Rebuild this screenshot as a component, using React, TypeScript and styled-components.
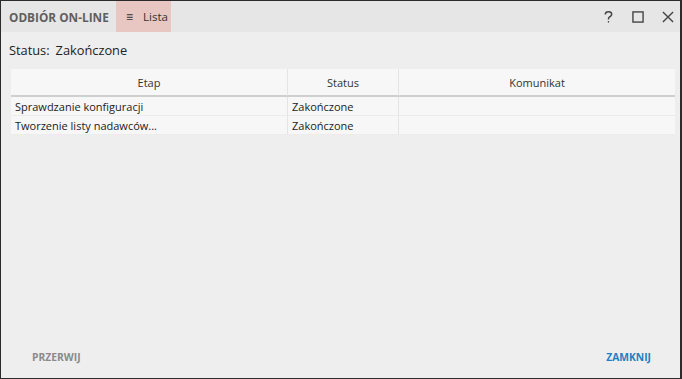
import React from "react";
import styled, { createGlobalStyle } from "styled-components";

const GlobalStyle = createGlobalStyle`
  html, body {
    margin: 0;
    padding: 0;
    background: #eeeeee;
  }
  * {
    box-sizing: border-box;
  }
`;

const Window = styled.div`
  width: 682px;
  height: 379px;
  border: 1px solid #2b2b2b;
  border-right-width: 2px;
  background: #eeeeee;
  display: flex;
  flex-direction: column;
  font-family: "Open Sans", "Noto Sans", sans-serif;
  color: #222;
`;

const TitleBar = styled.div`
  height: 31px;
  background: #e6e6e6;
  display: flex;
  align-items: stretch;
  flex-shrink: 0;
`;

const Title = styled.div`
  width: 115px;
  display: flex;
  align-items: center;
  padding: 0 0 0 8px;
  font-size: 11.8px;
  font-weight: 700;
  color: #5f5f5f;
  white-space: nowrap;
`;

const Tab = styled.div`
  display: flex;
  align-items: center;
  gap: 10px;
  padding: 0 8px 0 10px;
  background: #e8c7c3;
  font-size: 11.5px;
  color: #333;
  width: 55px;
`;

const TabIcon = styled.span`
  font-size: 12px;
  line-height: 1;
`;

const Controls = styled.div`
  margin-left: auto;
  display: flex;
  align-items: center;
  gap: 14px;
  padding-right: 4px;
`;

const ControlButton = styled.div`
  width: 16px;
  height: 16px;
  display: flex;
  align-items: center;
  justify-content: center;
  color: #444;
`;

const Body = styled.div`
  flex: 1;
  display: flex;
  flex-direction: column;
  padding: 7px 6px 0 8px;
`;

const StatusLine = styled.div`
  font-size: 12.8px;
  color: #222;
  display: flex;
  gap: 6px;
  height: 22px;
  align-items: center;
`;

const Table = styled.div`
  margin-top: 8px;
  margin-left: 2px;
  width: 664px;
  background: #f7f7f7;
  display: grid;
  grid-template-columns: 277px 111px 1fr;
  font-size: 11px;
`;

const HeadCell = styled.div<{ $last?: boolean }>`
  height: 28px;
  display: flex;
  align-items: center;
  justify-content: center;
  border-bottom: 2px solid #cfcfcf;
  border-right: ${({ $last }) => ($last ? "none" : "1px solid #e4e4e4")};
  color: #333;
`;

const Cell = styled.div<{ $last?: boolean }>`
  height: 19px;
  display: flex;
  align-items: center;
  padding: 1px 0 0 4px;
  border-bottom: 1px solid #ececec;
  border-right: ${({ $last }) => ($last ? "none" : "1px solid #e4e4e4")};
  color: #222;
  white-space: nowrap;
`;

const Footer = styled.div`
  margin-top: auto;
  height: 36px;
  display: flex;
  align-items: flex-start;
  justify-content: space-between;
  padding: 8px 29px 0 31px;
`;

const FooterButton = styled.div<{ $primary?: boolean }>`
  font-size: 10.3px;
  font-weight: 700;
  color: ${({ $primary }) => ($primary ? "#1f7fc2" : "#8a8a8a")};
`;

const rows = [
  { etap: "Sprawdzanie konfiguracji", status: "Zakończone", msg: "" },
  { etap: "Tworzenie listy nadawców...", status: "Zakończone", msg: "" },
];

const App = () => {
  return (
    <>
      <GlobalStyle />
      <Window>
        <TitleBar>
          <Title>ODBIÓR ON-LINE</Title>
          <Tab>
            <TabIcon>≡</TabIcon>
            Lista
          </Tab>
          <Controls>
            <ControlButton>
              <svg width="11" height="14" viewBox="0 0 12 14" fill="none" stroke="#444" strokeWidth="1.6">
                <path d="M2.5 4.2C2.5 2.4 4 1.2 6 1.2S9.5 2.4 9.5 4.1c0 1.6-1.3 2.2-2.3 2.8C6.4 7.4 6 7.9 6 9v0.6" />
                <circle cx="6" cy="12.3" r="0.9" fill="#444" stroke="none" />
              </svg>
            </ControlButton>
            <ControlButton>
              <svg width="12" height="12" viewBox="0 0 13 13" fill="none" stroke="#444" strokeWidth="1.5">
                <rect x="1" y="1" width="11" height="11" />
              </svg>
            </ControlButton>
            <ControlButton>
              <svg width="12" height="12" viewBox="0 0 13 13" fill="none" stroke="#444" strokeWidth="1.5">
                <path d="M1 1L12 12M12 1L1 12" />
              </svg>
            </ControlButton>
          </Controls>
        </TitleBar>
        <Body>
          <StatusLine>
            <span>Status:</span>
            <span>Zakończone</span>
          </StatusLine>
          <Table>
            <HeadCell>Etap</HeadCell>
            <HeadCell>Status</HeadCell>
            <HeadCell $last>Komunikat</HeadCell>
            {rows.map((r) => (
              <React.Fragment key={r.etap}>
                <Cell>{r.etap}</Cell>
                <Cell>{r.status}</Cell>
                <Cell $last>{r.msg}</Cell>
              </React.Fragment>
            ))}
          </Table>
        </Body>
        <Footer>
          <FooterButton>PRZERWIJ</FooterButton>
          <FooterButton $primary>ZAMKNIJ</FooterButton>
        </Footer>
      </Window>
    </>
  );
};

export default App;
